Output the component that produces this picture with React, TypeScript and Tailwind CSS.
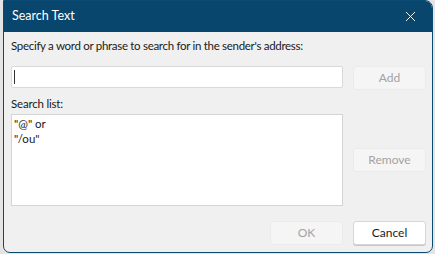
import { X } from "lucide-react";

function Button({ label, disabled }: { label: string; disabled?: boolean }) {
  return (
    <button
      className={
        disabled
          ? "w-[73px] h-[24px] rounded-[3px] border border-[#ebebeb] bg-[#f5f5f5] text-[12px] text-[#a3a3a3]"
          : "w-[73px] h-[24px] rounded-[3px] border border-[#d6d6d6] bg-white text-[12px] text-[#1a1a1a] shadow-[0_1px_0_#c8c8c8]"
      }
    >
      {label}
    </button>
  );
}

export default function App() {
  return (
    <div
      className="w-[435px] h-[254px] bg-[#e4e4e4] flex pl-[3px] pr-[2px] overflow-hidden"
      style={{ fontFamily: 'Lato, "Noto Sans", sans-serif' }}
    >
      <div className="flex-1 flex flex-col h-[253px] rounded-b-[7px] rounded-tr-[8px] border border-[#0a4a73] bg-[#f0f0f0] overflow-hidden">
        {/* Title bar */}
        <div className="h-[31px] shrink-0 bg-[#08466e] flex items-center justify-between pl-[8px] pr-[13px] pb-[1px]">
          <span className="text-white text-[12.5px]">Search Text</span>
          <X className="w-[17px] h-[17px] text-white" strokeWidth={1.3} />
        </div>

        {/* Body */}
        <div className="flex-1 flex flex-col pl-[7px] pr-[6px] pt-[6px]">
          <p className="text-[11.5px] tracking-[-0.3px] text-[#1a1a1a] leading-[16px]">
            Specify a word or phrase to search for in the sender's address:
          </p>

          <div className="flex mt-[12px] gap-[10px]">
            <div className="w-[332px] h-[22px] bg-white border border-[#d9d9d9] rounded-[2px] flex items-center pl-[2px]">
              <div className="w-px h-[14px] bg-[#333]" />
            </div>
            <Button label="Add" disabled />
          </div>

          <p className="text-[11.5px] tracking-[-0.2px] text-[#1a1a1a] leading-[16px] mt-[6px]">Search list:</p>

          <div className="flex mt-[2px] gap-[10px]">
            <div className="w-[332px] h-[92px] bg-white border border-[#d4d4d4] pl-[2px] pt-[1px] text-[11.5px] leading-[15px] text-[#1a1a1a]">
              <div>"@" or</div>
              <div>"/ou"</div>
            </div>
            <div className="flex flex-col pt-[34px]">
              <Button label="Remove" disabled />
            </div>
          </div>

          <div className="flex justify-end gap-[10px] mt-[15px]">
            <Button label="OK" disabled />
            <Button label="Cancel" />
          </div>
        </div>
      </div>
    </div>
  );
}
